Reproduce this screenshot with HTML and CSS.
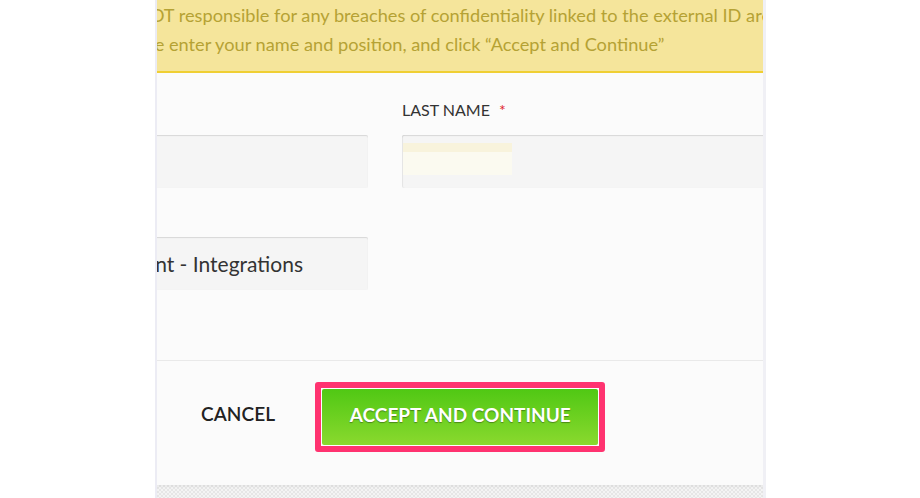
FILE: index.html
```html
<!DOCTYPE html>
<html lang="en">
<head>
<meta charset="utf-8">
<title>Accept and Continue</title>
<link rel="stylesheet" href="styles.css">
</head>
<body>
<div class="card">
  <div class="banner">
    <div class="line line-1">NOT responsible for any breaches of confidentiality linked to the external ID are</div>
    <div class="line line-2">Please enter your name and position, and click “Accept and Continue”</div>
  </div>
  <div class="form">
    <div class="grid">
      <div class="field">
        <div class="label">FIRST NAME <span class="req">*</span></div>
        <div class="input"></div>
      </div>
      <div class="field">
        <div class="label">LAST NAME <span class="req">*</span></div>
        <div class="input"><span class="autofill"></span></div>
      </div>
      <div class="field">
        <div class="label">POSITION</div>
        <div class="input input-value"><span class="value">nt - Integrations</span></div>
      </div>
    </div>
  </div>
  <div class="footer">
    <button class="cancel" type="button">CANCEL</button>
    <span class="highlight"><button class="accept" type="button">ACCEPT AND CONTINUE</button></span>
  </div>
  <div class="texture"></div>
</div>
</body>
</html>
```
FILE: styles.css
```css
html, body {
  margin: 0;
  padding: 0;
  background: #ffffff;
  font-family: Lato, "Open Sans", sans-serif;
}

.card {
  margin-left: 155px;
  width: 606px;
  height: 498px;
  border-left: 2px solid #ececf4;
  border-right: 3px solid #f0f0f5;
  background: #fbfbfb;
  overflow: hidden;
  display: flex;
  flex-direction: column;
}

.banner {
  height: 73px;
  background: #f5e59b;
  border-bottom: 2px solid #f0cf33;
  color: #b5a234;
  font-size: 18.2px;
  line-height: 29px;
  padding-top: 1px;
  box-sizing: border-box;
  flex: none;
}

.line {
  white-space: nowrap;
  overflow: hidden;
}

.line-1 { text-indent: -21px; }
.line-2 { text-indent: -44px; }

.form {
  height: 288px;
  padding-top: 26px;
  box-sizing: border-box;
  border-bottom: 1px solid #e9e9e9;
  flex: none;
}

.grid {
  display: grid;
  grid-template-columns: 380px 380px;
  column-gap: 34px;
  row-gap: 13px;
  margin-left: -169px;
}

.field {
  display: flex;
  flex-direction: column;
  gap: 14px;
}

.label {
  font-size: 16px;
  line-height: 22px;
  color: #333333;
}

.req {
  color: #e0262b;
  margin-left: 5px;
}

.input {
  height: 53px;
  background: #f5f5f5;
  box-shadow: inset 0 1px 1px rgba(0, 0, 0, 0.12), inset 1px 0 1px rgba(0, 0, 0, 0.06);
  border-radius: 2px;
  position: relative;
  display: flex;
  align-items: center;
}

.autofill {
  position: absolute;
  left: 1px;
  top: 8px;
  width: 109px;
  height: 32px;
  background: linear-gradient(#f8f3dc 0, #f8f3dc 9px, #fbfaf0 9px);
}

.input-value {
  justify-content: flex-end;
}

.value {
  font-size: 21px;
  color: #333333;
  margin-right: 65px;
}

.footer {
  height: 124px;
  display: flex;
  align-items: flex-start;
  padding: 21px 0 0 44px;
  box-sizing: border-box;
  gap: 40px;
  flex: none;
}

.cancel {
  border: 0;
  background: transparent;
  padding: 0;
  margin-top: 20px;
  font-family: inherit;
  font-size: 19px;
  font-weight: 600;
  color: #222222;
  letter-spacing: 0.1px;
}

.highlight {
  display: block;
  border: 6px solid #ff3370;
  border-radius: 3px;
  padding: 1px;
  background: #ffffff;
}

.accept {
  display: block;
  width: 276px;
  height: 56px;
  border: 0;
  border-radius: 2px;
  background: linear-gradient(#50c814, #8ad92e);
  color: #ffffff;
  font-family: inherit;
  font-size: 19px;
  font-weight: 700;
  text-shadow: 0 1px 1px rgba(0, 0, 0, 0.35);
  padding: 0 0 5px;
}

.texture {
  flex: 1;
  box-shadow: inset 0 2px 2px rgba(0, 0, 0, 0.04);
  background-color: #efefef;
  background-image: repeating-conic-gradient(#e6e6e6 0 25%, #f4f4f4 0 50%);
  background-size: 4px 4px;
}
```
